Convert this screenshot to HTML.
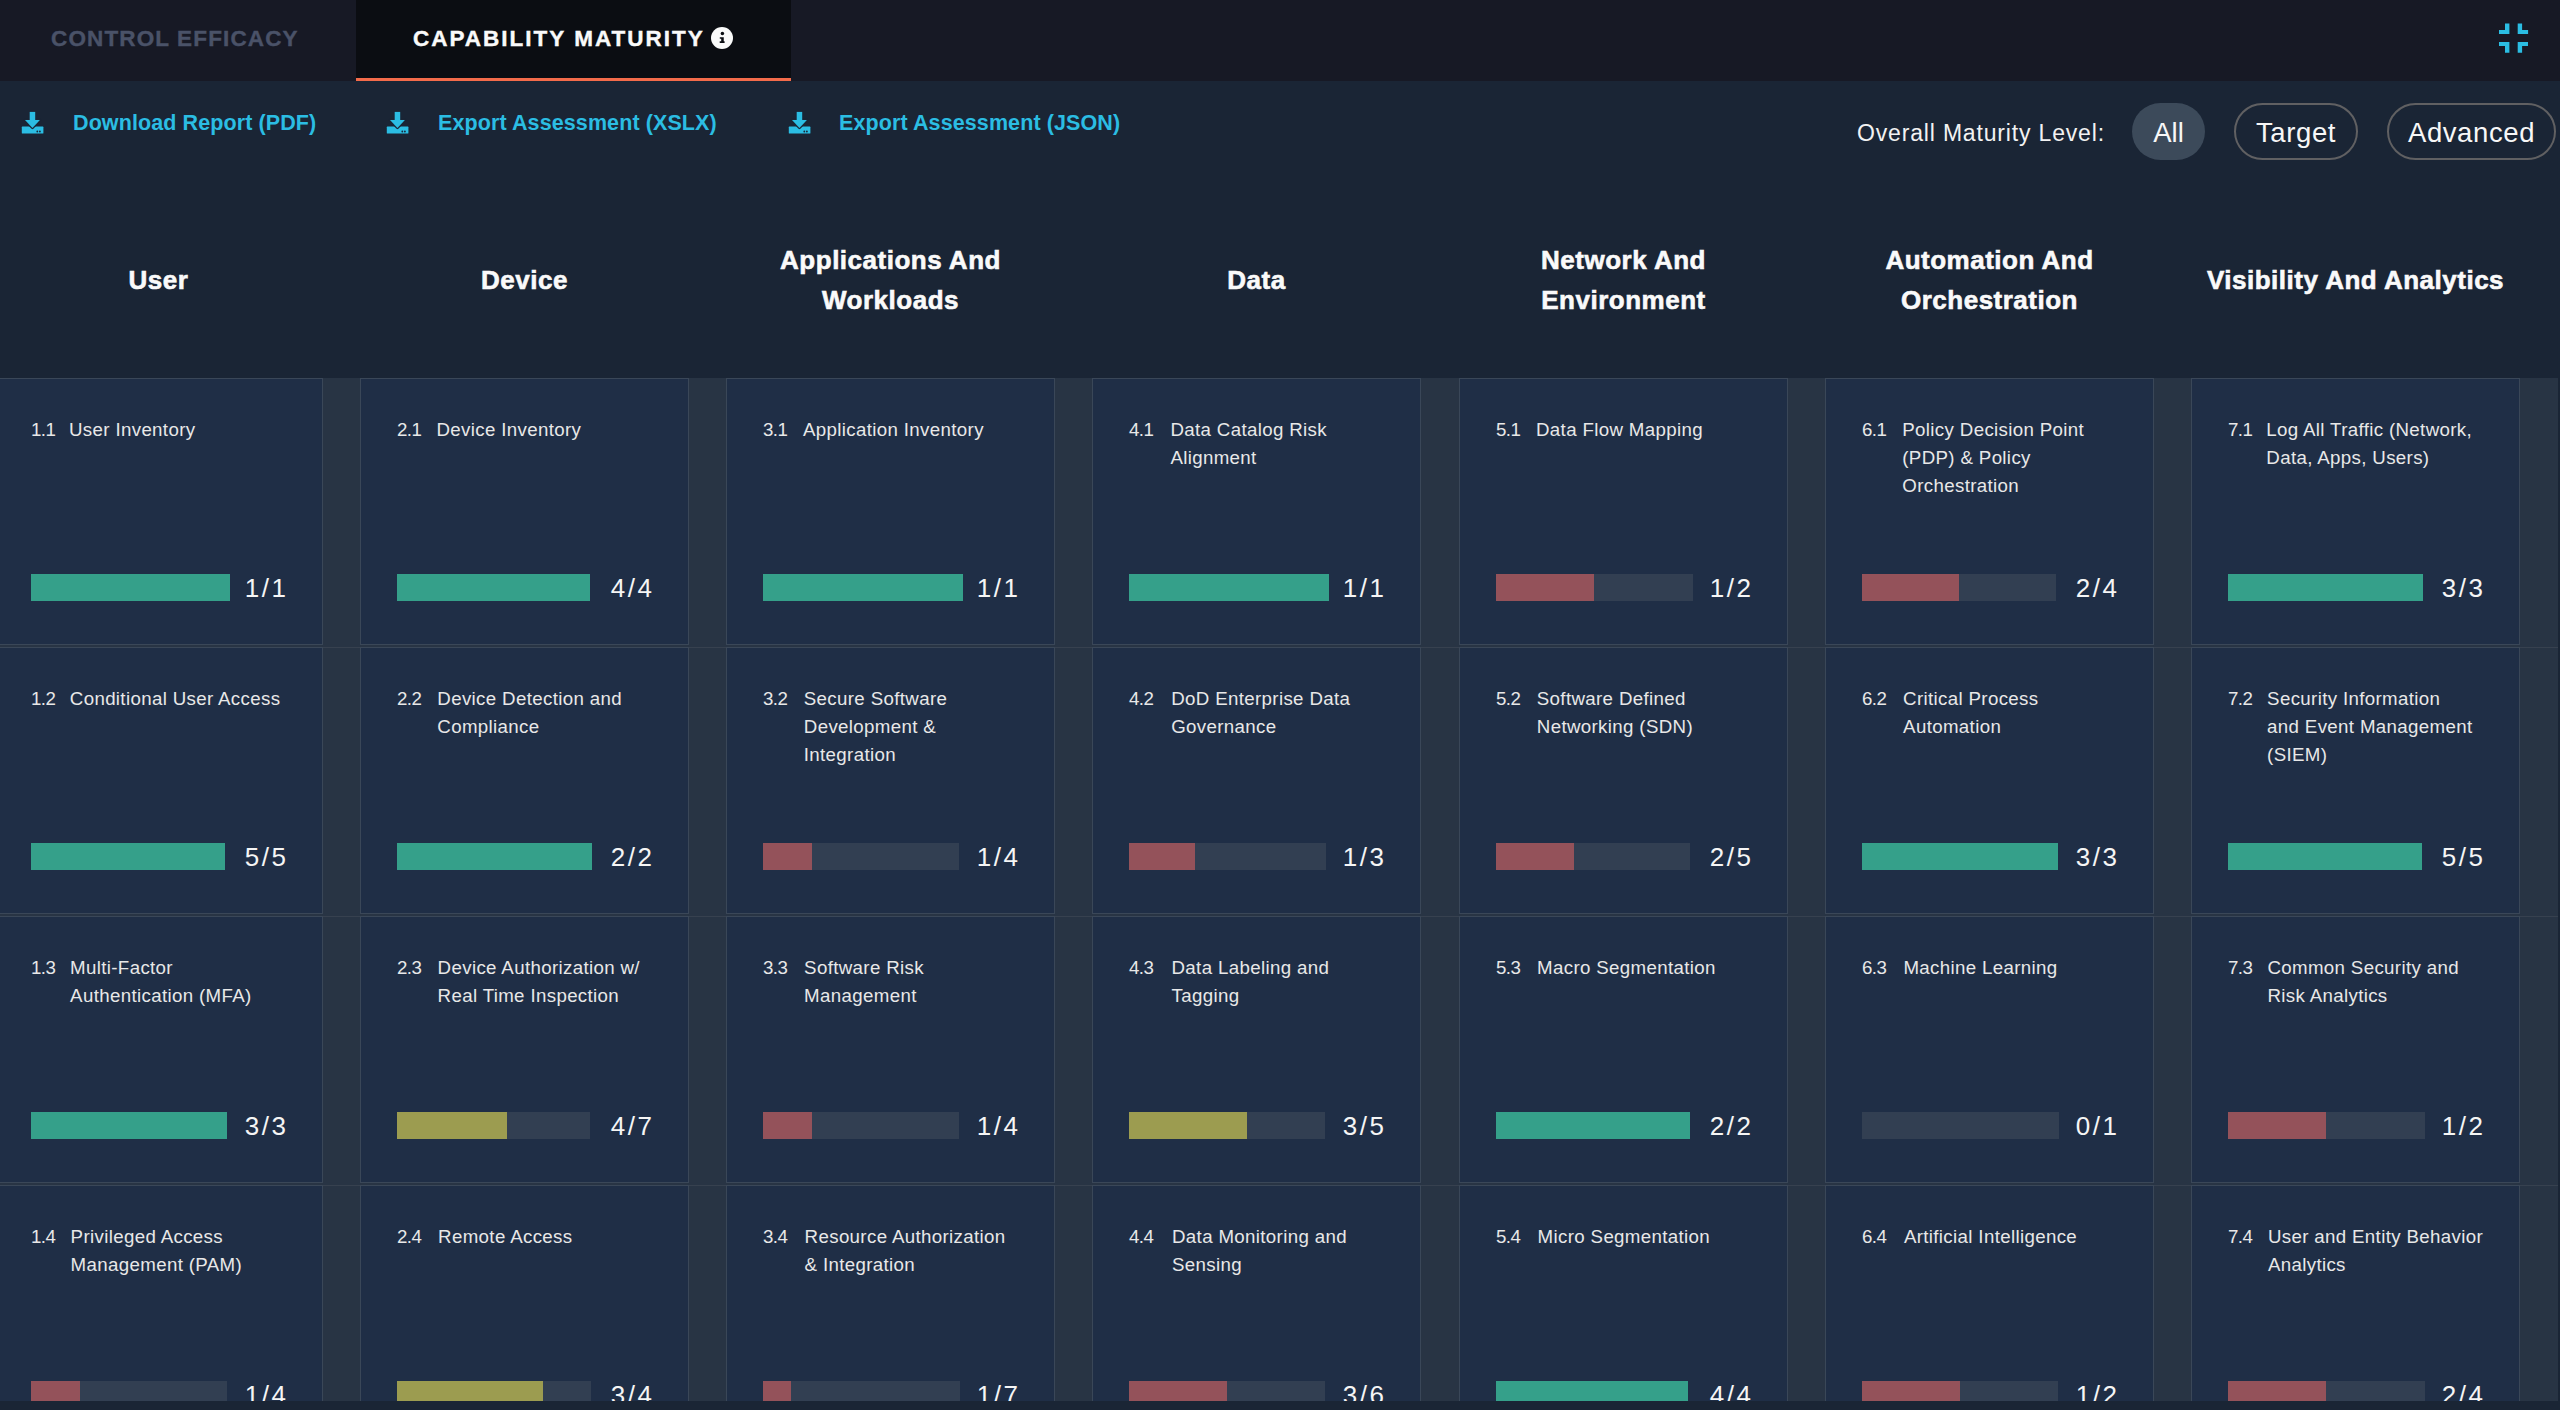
<!DOCTYPE html>
<html><head><meta charset="utf-8"><title>Capability Maturity</title>
<style>
:root{--green:#35a08a;--red:#94525a;--olive:#9c9c50;--track:#323f52;--blue:#2bbde3}
*{box-sizing:border-box;margin:0;padding:0}
html,body{width:2560px;height:1410px;overflow:hidden;background:#1a2535;font-family:"Liberation Sans",sans-serif;color:#f2f2f2}
.tabbar{position:absolute;left:0;top:0;width:2560px;height:81px;background:#171925}
.tab{position:absolute;top:0;height:81px;white-space:nowrap;font-weight:700;font-size:22.5px}
.tab1{left:0;width:356px;color:#4a5268;letter-spacing:1.13px;-webkit-text-stroke:0.4px #4a5268}
.tab1 span{position:absolute;left:51px;top:26px}
.tab2{left:356px;width:435px;background:#0b0d12;color:#fafafa;border-bottom:3px solid #f46b4a;letter-spacing:2.0px;-webkit-text-stroke:0.4px #fafafa}
.tab2 span{position:absolute;left:57px;top:26px}
.info{position:absolute;left:355px;top:27px;width:22px;height:22px;border-radius:50%;background:#fafafa}
.compress{position:absolute;left:2496px;top:21px}
.link{position:absolute;top:110px;white-space:nowrap;font-weight:700;font-size:21.5px;color:var(--blue);letter-spacing:0.1px}
.link svg{position:absolute;top:1px;left:-1px}
.link span{position:absolute;top:0.6px}
.lvl{position:absolute;left:1857px;top:120px;font-size:23px;letter-spacing:0.83px;white-space:nowrap;color:#f2f2f2}
.pill{position:absolute;top:103px;height:57px;border-radius:29px;font-size:27.5px;color:#f7f7f7;white-space:nowrap;text-align:center;line-height:60px}
.pill.o{border:2px solid #606062;line-height:56px;letter-spacing:0.6px}
.pill.a{background:#3c4a5a}
.hdr{position:absolute;top:240px;height:80px;width:329px;display:flex;align-items:center;justify-content:center;text-align:center;font-weight:700;font-size:26px;line-height:40px;color:#fafafa;-webkit-text-stroke:0.6px #fafafa;letter-spacing:0.5px}
.gridbg{position:absolute;top:378px;height:1023px;background:#283444;width:37px}
.rowline{position:absolute;height:1px;background:#37414f;width:37px}
.card{position:absolute;width:329px;height:267px;background:#1f2e46;border:1px solid #3a4758}
.num{position:absolute;left:36px;top:40px;font-size:18.7px;color:#e8e8e8;letter-spacing:-0.6px}
.ttl{position:absolute;left:76px;top:36.5px;font-size:18.7px;line-height:28.4px;color:#e8e8e8;white-space:nowrap;letter-spacing:0.35px}
.bar{position:absolute;left:36px;top:195px;height:27px;background:var(--track)}
.fill{position:absolute;left:0;top:0;height:27px}
.frac{position:absolute;right:33.5px;top:193.5px;font-size:26px;letter-spacing:2.5px;color:#f5f5f5;white-space:nowrap}
.bottom{position:absolute;left:0;top:1401px;width:2560px;height:9px;background:#1a2535}
</style></head><body>

<div class="tabbar"></div>
<div class="tab tab1"><span>CONTROL EFFICACY</span></div>
<div class="tab tab2"><span>CAPABILITY MATURITY</span><div class="info"><svg width="22" height="22" viewBox="0 0 22 22"><circle cx="11.4" cy="6.6" r="1.75" fill="#0b0d12"/><path d="M8.8 10.2h3.95v4.1h0.85v1.75H8.7v-1.75h1.5v-2.45H8.8z" fill="#0b0d12"/></svg></div></div>
<svg class="compress" width="36" height="36" viewBox="0 0 36 36"><g fill="#2bbde3"><path d="M9 2.6h4.4v10.4H3v-4h6z"/><path d="M21.7 2.6h4.4v6.4h6v4H21.7z"/><path d="M3 21h10.4v10.8H9v-6.8H3z"/><path d="M21.7 21H32v4h-5.9v6.8h-4.4z"/></g></svg>
<div class="link" style="left:22px"><svg width="24" height="24" viewBox="0 0 24 24"><g transform="translate(0.8 0.9)"><rect x="0" y="14.7" width="21.6" height="7" rx="0.6" fill="#2bbde3"/><path d="M3.2 8.2H18.1L10.65 16z" fill="#2bbde3" stroke="#1a2535" stroke-width="2.6" stroke-linejoin="round" paint-order="stroke"/><rect x="7.9" y="0" width="5.5" height="9" fill="#2bbde3"/><circle cx="15.5" cy="19.6" r="0.9" fill="#1a2535"/><circle cx="18.1" cy="19.6" r="0.9" fill="#1a2535"/></g></svg><span style="left:51px">Download Report (PDF)</span></div>
<div class="link" style="left:387px"><svg width="24" height="24" viewBox="0 0 24 24"><g transform="translate(0.8 0.9)"><rect x="0" y="14.7" width="21.6" height="7" rx="0.6" fill="#2bbde3"/><path d="M3.2 8.2H18.1L10.65 16z" fill="#2bbde3" stroke="#1a2535" stroke-width="2.6" stroke-linejoin="round" paint-order="stroke"/><rect x="7.9" y="0" width="5.5" height="9" fill="#2bbde3"/><circle cx="15.5" cy="19.6" r="0.9" fill="#1a2535"/><circle cx="18.1" cy="19.6" r="0.9" fill="#1a2535"/></g></svg><span style="left:51px">Export Assessment (XSLX)</span></div>
<div class="link" style="left:789px"><svg width="24" height="24" viewBox="0 0 24 24"><g transform="translate(0.8 0.9)"><rect x="0" y="14.7" width="21.6" height="7" rx="0.6" fill="#2bbde3"/><path d="M3.2 8.2H18.1L10.65 16z" fill="#2bbde3" stroke="#1a2535" stroke-width="2.6" stroke-linejoin="round" paint-order="stroke"/><rect x="7.9" y="0" width="5.5" height="9" fill="#2bbde3"/><circle cx="15.5" cy="19.6" r="0.9" fill="#1a2535"/><circle cx="18.1" cy="19.6" r="0.9" fill="#1a2535"/></g></svg><span style="left:50px">Export Assessment (JSON)</span></div>
<div class="lvl">Overall Maturity Level:</div>
<div class="pill a" style="left:2132px;width:73px">All</div>
<div class="pill o" style="left:2234px;width:124px">Target</div>
<div class="pill o" style="left:2387px;width:169px">Advanced</div>
<div class="hdr" style="left:-6px">User</div>
<div class="hdr" style="left:360px">Device</div>
<div class="hdr" style="left:726px">Applications And<br>Workloads</div>
<div class="hdr" style="left:1092px">Data</div>
<div class="hdr" style="left:1459px">Network And<br>Environment</div>
<div class="hdr" style="left:1825px">Automation And<br>Orchestration</div>
<div class="hdr" style="left:2191px">Visibility And Analytics</div>
<div class="gridbg" style="left:0;width:2558px"></div>
<div class="rowline" style="left:323px;width:37px;top:647px"></div>
<div class="rowline" style="left:323px;width:37px;top:916px"></div>
<div class="rowline" style="left:323px;width:37px;top:1185px"></div>
<div class="rowline" style="left:689px;width:37px;top:647px"></div>
<div class="rowline" style="left:689px;width:37px;top:916px"></div>
<div class="rowline" style="left:689px;width:37px;top:1185px"></div>
<div class="rowline" style="left:1055px;width:37px;top:647px"></div>
<div class="rowline" style="left:1055px;width:37px;top:916px"></div>
<div class="rowline" style="left:1055px;width:37px;top:1185px"></div>
<div class="rowline" style="left:1421px;width:38px;top:647px"></div>
<div class="rowline" style="left:1421px;width:38px;top:916px"></div>
<div class="rowline" style="left:1421px;width:38px;top:1185px"></div>
<div class="rowline" style="left:1788px;width:37px;top:647px"></div>
<div class="rowline" style="left:1788px;width:37px;top:916px"></div>
<div class="rowline" style="left:1788px;width:37px;top:1185px"></div>
<div class="rowline" style="left:2154px;width:37px;top:647px"></div>
<div class="rowline" style="left:2154px;width:37px;top:916px"></div>
<div class="rowline" style="left:2154px;width:37px;top:1185px"></div>
<div class="rowline" style="left:2520px;width:38px;top:647px"></div>
<div class="rowline" style="left:2520px;width:38px;top:916px"></div>
<div class="rowline" style="left:2520px;width:38px;top:1185px"></div>
<div class="card" style="left:-6px;top:378px"><div class="num">1.1</div><div class="ttl" style="left:74.0px">User Inventory</div><div class="bar" style="width:199px"><div class="fill" style="width:199px;background:var(--green)"></div></div><div class="frac">1/1</div></div>
<div class="card" style="left:-6px;top:647px"><div class="num">1.2</div><div class="ttl" style="left:74.8px">Conditional User Access</div><div class="bar" style="width:194px"><div class="fill" style="width:194px;background:var(--green)"></div></div><div class="frac">5/5</div></div>
<div class="card" style="left:-6px;top:916px"><div class="num">1.3</div><div class="ttl" style="left:75.1px">Multi-Factor<br>Authentication (MFA)</div><div class="bar" style="width:196px"><div class="fill" style="width:196px;background:var(--green)"></div></div><div class="frac">3/3</div></div>
<div class="card" style="left:-6px;top:1185px"><div class="num">1.4</div><div class="ttl" style="left:75.6px">Privileged Access<br>Management (PAM)</div><div class="bar" style="width:196px"><div class="fill" style="width:49px;background:var(--red)"></div></div><div class="frac">1/4</div></div>
<div class="card" style="left:360px;top:378px"><div class="num">2.1</div><div class="ttl" style="left:75.5px">Device Inventory</div><div class="bar" style="width:193px"><div class="fill" style="width:193px;background:var(--green)"></div></div><div class="frac">4/4</div></div>
<div class="card" style="left:360px;top:647px"><div class="num">2.2</div><div class="ttl" style="left:76.3px">Device Detection and<br>Compliance</div><div class="bar" style="width:195px"><div class="fill" style="width:195px;background:var(--green)"></div></div><div class="frac">2/2</div></div>
<div class="card" style="left:360px;top:916px"><div class="num">2.3</div><div class="ttl" style="left:76.6px">Device Authorization w/<br>Real Time Inspection</div><div class="bar" style="width:193px"><div class="fill" style="width:110px;background:var(--olive)"></div></div><div class="frac">4/7</div></div>
<div class="card" style="left:360px;top:1185px"><div class="num">2.4</div><div class="ttl" style="left:77.1px">Remote Access</div><div class="bar" style="width:194px"><div class="fill" style="width:146px;background:var(--olive)"></div></div><div class="frac">3/4</div></div>
<div class="card" style="left:726px;top:378px"><div class="num">3.1</div><div class="ttl" style="left:76.0px">Application Inventory</div><div class="bar" style="width:200px"><div class="fill" style="width:200px;background:var(--green)"></div></div><div class="frac">1/1</div></div>
<div class="card" style="left:726px;top:647px"><div class="num">3.2</div><div class="ttl" style="left:76.8px">Secure Software<br>Development &amp;<br>Integration</div><div class="bar" style="width:196px"><div class="fill" style="width:49px;background:var(--red)"></div></div><div class="frac">1/4</div></div>
<div class="card" style="left:726px;top:916px"><div class="num">3.3</div><div class="ttl" style="left:77.1px">Software Risk<br>Management</div><div class="bar" style="width:196px"><div class="fill" style="width:49px;background:var(--red)"></div></div><div class="frac">1/4</div></div>
<div class="card" style="left:726px;top:1185px"><div class="num">3.4</div><div class="ttl" style="left:77.6px">Resource Authorization<br>&amp; Integration</div><div class="bar" style="width:197px"><div class="fill" style="width:28px;background:var(--red)"></div></div><div class="frac">1/7</div></div>
<div class="card" style="left:1092px;top:378px"><div class="num">4.1</div><div class="ttl" style="left:77.4px">Data Catalog Risk<br>Alignment</div><div class="bar" style="width:200px"><div class="fill" style="width:200px;background:var(--green)"></div></div><div class="frac">1/1</div></div>
<div class="card" style="left:1092px;top:647px"><div class="num">4.2</div><div class="ttl" style="left:78.2px">DoD Enterprise Data<br>Governance</div><div class="bar" style="width:197px"><div class="fill" style="width:66px;background:var(--red)"></div></div><div class="frac">1/3</div></div>
<div class="card" style="left:1092px;top:916px"><div class="num">4.3</div><div class="ttl" style="left:78.5px">Data Labeling and<br>Tagging</div><div class="bar" style="width:196px"><div class="fill" style="width:118px;background:var(--olive)"></div></div><div class="frac">3/5</div></div>
<div class="card" style="left:1092px;top:1185px"><div class="num">4.4</div><div class="ttl" style="left:79.0px">Data Monitoring and<br>Sensing</div><div class="bar" style="width:196px"><div class="fill" style="width:98px;background:var(--red)"></div></div><div class="frac">3/6</div></div>
<div class="card" style="left:1459px;top:378px"><div class="num">5.1</div><div class="ttl" style="left:76.0px">Data Flow Mapping</div><div class="bar" style="width:197px"><div class="fill" style="width:98px;background:var(--red)"></div></div><div class="frac">1/2</div></div>
<div class="card" style="left:1459px;top:647px"><div class="num">5.2</div><div class="ttl" style="left:76.8px">Software Defined<br>Networking (SDN)</div><div class="bar" style="width:194px"><div class="fill" style="width:78px;background:var(--red)"></div></div><div class="frac">2/5</div></div>
<div class="card" style="left:1459px;top:916px"><div class="num">5.3</div><div class="ttl" style="left:77.1px">Macro Segmentation</div><div class="bar" style="width:194px"><div class="fill" style="width:194px;background:var(--green)"></div></div><div class="frac">2/2</div></div>
<div class="card" style="left:1459px;top:1185px"><div class="num">5.4</div><div class="ttl" style="left:77.6px">Micro Segmentation</div><div class="bar" style="width:192px"><div class="fill" style="width:192px;background:var(--green)"></div></div><div class="frac">4/4</div></div>
<div class="card" style="left:1825px;top:378px"><div class="num">6.1</div><div class="ttl" style="left:76.3px">Policy Decision Point<br>(PDP) &amp; Policy<br>Orchestration</div><div class="bar" style="width:194px"><div class="fill" style="width:97px;background:var(--red)"></div></div><div class="frac">2/4</div></div>
<div class="card" style="left:1825px;top:647px"><div class="num">6.2</div><div class="ttl" style="left:77.1px">Critical Process<br>Automation</div><div class="bar" style="width:196px"><div class="fill" style="width:196px;background:var(--green)"></div></div><div class="frac">3/3</div></div>
<div class="card" style="left:1825px;top:916px"><div class="num">6.3</div><div class="ttl" style="left:77.4px">Machine Learning</div><div class="bar" style="width:197px"></div><div class="frac">0/1</div></div>
<div class="card" style="left:1825px;top:1185px"><div class="num">6.4</div><div class="ttl" style="left:77.9px">Artificial Intelligence</div><div class="bar" style="width:196px"><div class="fill" style="width:98px;background:var(--red)"></div></div><div class="frac">1/2</div></div>
<div class="card" style="left:2191px;top:378px"><div class="num">7.1</div><div class="ttl" style="left:74.3px">Log All Traffic (Network,<br>Data, Apps, Users)</div><div class="bar" style="width:195px"><div class="fill" style="width:195px;background:var(--green)"></div></div><div class="frac">3/3</div></div>
<div class="card" style="left:2191px;top:647px"><div class="num">7.2</div><div class="ttl" style="left:75.1px">Security Information<br>and Event Management<br>(SIEM)</div><div class="bar" style="width:194px"><div class="fill" style="width:194px;background:var(--green)"></div></div><div class="frac">5/5</div></div>
<div class="card" style="left:2191px;top:916px"><div class="num">7.3</div><div class="ttl" style="left:75.4px">Common Security and<br>Risk Analytics</div><div class="bar" style="width:197px"><div class="fill" style="width:98px;background:var(--red)"></div></div><div class="frac">1/2</div></div>
<div class="card" style="left:2191px;top:1185px"><div class="num">7.4</div><div class="ttl" style="left:75.9px">User and Entity Behavior<br>Analytics</div><div class="bar" style="width:197px"><div class="fill" style="width:98px;background:var(--red)"></div></div><div class="frac">2/4</div></div>
<div class="bottom"></div>
</body></html>
